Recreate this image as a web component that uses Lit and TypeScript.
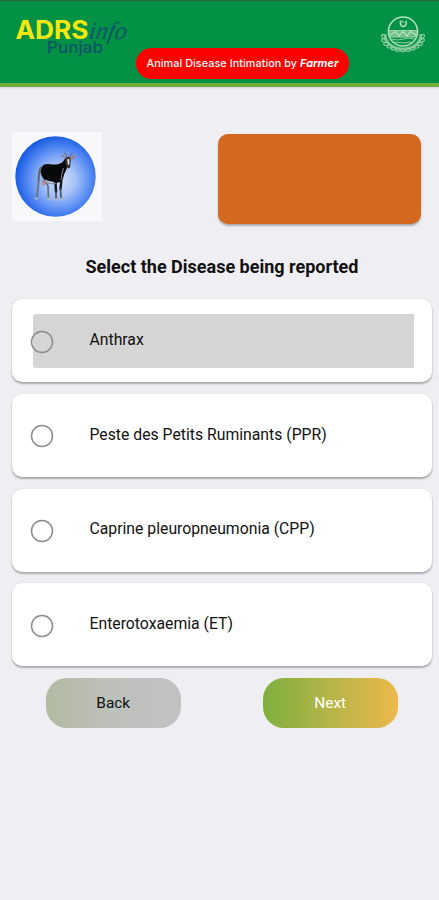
import { LitElement, html, css, svg } from "lit";
import { customElement, property } from "lit/decorators.js";

@customElement("brand-logo")
class BrandLogo extends LitElement {
  static styles = css`
    :host { display: block; width: 120px; height: 46px; }
    svg { display: block; overflow: visible; }
    .name { font: 700 25px Inter, sans-serif; fill: #f6e80c; }
    .script { font: italic 400 25px "Liberation Serif", serif; fill: #0b5568; }
    .region { font: 500 16px Inter, sans-serif; fill: #0b5568; }
  `;
  render() {
    return html`<svg width="120" height="46" viewBox="0 0 120 46">
      <text class="name" x="1.5" y="26" textLength="73" lengthAdjust="spacingAndGlyphs">ADRS</text>
      <text class="script" x="0" y="0" transform="translate(74 25.5) skewX(-10)" textLength="38" lengthAdjust="spacingAndGlyphs">info</text>
      <text class="region" x="33" y="39.5" textLength="56" lengthAdjust="spacingAndGlyphs">Punjab</text>
    </svg>`;
  }
}

@customElement("state-emblem")
class StateEmblem extends LitElement {
  static styles = css`
    :host { display: block; width: 44px; height: 40px; }
    svg { display: block; }
  `;
  render() {
    const leaves = [
      [2.4, 21.5, 60], [2.8, 25.5, 30], [5, 29, 10], [8.5, 31.5, -10], [12.5, 33.4, 10], [17, 34.8, -10],
      [41.6, 21.5, -60], [41.2, 25.5, -30], [39, 29, -10], [35.5, 31.5, 10], [31.5, 33.4, -10], [27, 34.8, 10], [22, 35.2, 0],
    ];
    return html`<svg width="44" height="40" viewBox="0 0 44 40" fill="none" stroke="#b3e2bc">
      <path d="M4 19C4 28 12 34 22 34S40 28 40 19" stroke="#74c28b" stroke-width="3" />
      ${leaves.map(([x, y, r]) => svg`<ellipse cx=${x} cy=${y} rx="2.3" ry="1.5" transform="rotate(${r} ${x} ${y})" stroke="#8fd0a0" stroke-width="1.1" />`)}
      <circle cx="22" cy="16.5" r="14.6" stroke-width="1.5" />
      <path d="M8 15.5h28c0 3-.6 5-1.6 6.500H9.600C8.600 20.500 8 18.500 8 15.500Z" fill="#6fc087" stroke="#9ad6a8" stroke-width="1" />
      <path d="M9 20l5.500-3.500 3.500 4.500 4-4.500 4 4.500 3.500-4.500L35 20" stroke-width="1.3" />
      <path d="M11 24q5.500 2 11 0t11 0M13.500 27q8.500 2 17 0" stroke="#8fd0a0" stroke-width="1" />
      <path d="M19.500 5.500c-.5 4.500 1 6.300 3 6.100 2.300-.3 3.200-3 2.400-5.800" stroke-width="1.5" />
      <path d="M21 6l1.500 1.700" stroke-width="1.2" />
    </svg>`;
  }
}

@customElement("goat-picture")
class GoatPicture extends LitElement {
  static styles = css`
    :host { display: block; width: 90px; height: 89px; background: #f8f8fa; }
    svg { display: block; }
  `;
  render() {
    return html`<svg width="90" height="89" viewBox="0 0 90 89">
      <defs>
        <radialGradient id="sky" cx="0.55" cy="0.54" r="0.54">
          <stop offset="0" stop-color="#d3e0fc" />
          <stop offset="0.35" stop-color="#a9c4f9" />
          <stop offset="0.7" stop-color="#5a8ef3" />
          <stop offset="1" stop-color="#1c5de4" />
        </radialGradient>
      </defs>
      <circle cx="43.5" cy="44.5" r="40.2" fill="url(#sky)" />
      <g fill="none" stroke-linecap="round" stroke-linejoin="round">
        <path d="M29 38c-3 5-2 9-2.500 13l-1.500 14M32 48l4 6 .5 12" stroke="#6b7385" stroke-width="1.9" />
        <path d="M43.500 50l.5 10M49.500 46l-1 11" stroke="#17191c" stroke-width="2.5" />
        <path d="M44 60v7M48.500 57l.5 9" stroke="#4c5364" stroke-width="1.7" />
        <path d="M23.500 66.500h2M36 66.500h3M43 67.500h3M49 66.500h2" stroke="#b1b4c4" stroke-width="1.8" />
      </g>
      <path d="M29 48l5 1.500-1.500 4h-2z" fill="#b98a98" />
      <path d="M30 34.500c2-2.500 5-2.800 8-2.300 5 .7 9 .5 12.500-2l3.500-5 2 2 .2 5.500c-1 4-4.200 8-5 13-1 3.500-4.200 5.500-8 5-4-2-10-1.500-12.500-5-2-3-2.500-7-.7-11.200z" fill="#08090b" />
      <path d="M29 35c-2.600 4-2.500 8-2.500 14" stroke="#65635f" stroke-width="1.6" fill="none" />
      <path d="M53 27l3-2.500 3 1.500-.6 6-.4 4-2 .3-2.500-4z" fill="#31302f" />
      <path d="M55.200 27.500l2-.7.300 5-1.500 1.500z" fill="#f0e8e6" />
      <path d="M51.500 36q-2 6-2.500 12M35 50.500q5 2 9 1" stroke="#8a817b" fill="none" />
      <path d="M54.500 26q-2-3-6-3 2 3 5 3.600zM58 26q2-3 5.500-2.600-1 3.600-4.800 4.400z" fill="#a77884" />
      <path d="M55 25q-.5-3.500-3-4M58 25q0-3.500 2.500-4.500" stroke="#6b6577" fill="none" />
    </svg>`;
  }
}

@customElement("disease-option")
class DiseaseOption extends LitElement {
  @property() label = "";
  @property({ type: Boolean }) active = false;

  static styles = css`
    :host { display: block; }
    .card {
      box-sizing: border-box; height: 83px; padding: 15px 18px 14px 21px;
      background: #fff; border-radius: 10px;
      box-shadow: 0 2px 2px rgba(0, 0, 0, 0.28), 0 0 2px rgba(0, 0, 0, 0.1);
    }
    .row { height: 54px; display: flex; align-items: center; border-radius: 3px 0 0 3px; }
    .row.active { background: #d5d5d5; }
    .radio { width: 24px; height: 24px; margin: 1px 0 0 -3px; flex: none; fill: none; stroke: #8c8c8c; stroke-width: 1.5; }
    .label { margin: 0 0 2.5px 35.5px; font: 400 15.77px/22px Roboto, sans-serif; color: #111; white-space: nowrap; }
  `;
  render() {
    return html`<div class="card">
      <div class="row ${this.active ? "active" : ""}">
        <svg class="radio" viewBox="0 0 24 24"><circle cx="12" cy="12" r="10.5" /></svg>
        <span class="label">${this.label}</span>
      </div>
    </div>`;
  }
}

@customElement("app-root")
class AppRoot extends LitElement {
  static styles = css`
    :host { display: block; width: 100%; height: 900px; overflow: hidden; background: #efeef3; font-family: Roboto, sans-serif; color: #111; }
    header {
      position: relative; box-sizing: border-box; height: 87px; padding: 12px 14px;
      display: flex; justify-content: space-between; background: #039145;
      border-top: 1px solid #2d6742; border-bottom: 4px solid #77ad3c;
      box-shadow: 0 1px 2px rgba(0, 0, 0, 0.12);
    }
    state-emblem { margin-top: 2px; }
    .tag {
      position: absolute; left: 136px; top: 46.5px; box-sizing: border-box; width: 213px; height: 31px; padding-top: 1.5px; border-radius: 15.5px;
      display: flex; align-items: center; justify-content: center; background: #fd0100;
      color: #fff; font: 500 10.8px/14px Inter, sans-serif; white-space: pre; letter-spacing: 0.07px;
    }
    .tag em { font-weight: 700; }
    .hero { display: flex; justify-content: space-between; padding: 45px 18.5px 0 12px; }
    .panel { width: 202.5px; height: 90px; margin-top: 2px; border-radius: 10px; background: #d2691e; box-shadow: 0 2px 2px rgba(0, 0, 0, 0.28); }
    h1 { margin: 30px 0 0; padding-left: 5px; font: 700 18px/26px Roboto, sans-serif; text-align: center; }
    .options { display: flex; flex-direction: column; gap: 11.65px; margin: 19.3px 7px 0 12px; }
    .actions { display: flex; justify-content: space-between; margin: 11.5px 41px 0 45.5px; }
    button { width: 135.5px; height: 50px; padding: 0; border: 0; border-radius: 21px; font: 400 15.4px/50px Roboto, sans-serif; }
    .back { background: linear-gradient(90deg, #b2baa3, #bdc0b9 45%, #c1c1c3); color: #111; }
    .next { background: linear-gradient(90deg, #7faf3e, #b5b548 50%, #edb94c); color: #fff; }
  `;
  render() {
    return html`
      <header>
        <brand-logo></brand-logo>
        <state-emblem></state-emblem>
        <div class="tag">Animal Disease Intimation by <em>Farmer</em></div>
      </header>
      <section class="hero">
        <goat-picture></goat-picture>
        <div class="panel"></div>
      </section>
      <h1>Select the Disease being reported</h1>
      <div class="options">
        <disease-option label="Anthrax" active></disease-option>
        <disease-option label="Peste des Petits Ruminants (PPR)"></disease-option>
        <disease-option label="Caprine pleuropneumonia (CPP)"></disease-option>
        <disease-option label="Enterotoxaemia (ET)"></disease-option>
      </div>
      <div class="actions">
        <button class="back">Back</button>
        <button class="next">Next</button>
      </div>
    `;
  }
}
